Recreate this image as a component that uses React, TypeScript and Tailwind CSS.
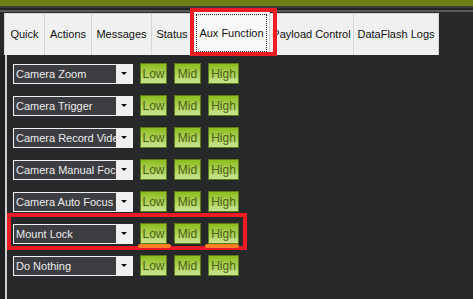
import React from 'react';

const tabs = [
  { label: 'Quick', w: 'w-[41px]' },
  { label: 'Actions', w: 'w-[47px]' },
  { label: 'Messages', w: 'w-[60px]' },
  { label: 'Status', w: 'w-[41px]' },
  { label: 'Aux Function', w: 'w-[77px]', active: true },
  { label: 'Payload Control', w: 'w-[84px]' },
  { label: 'DataFlash Logs', w: 'w-[85px]' },
];

const rows = [
  'Camera Zoom',
  'Camera Trigger',
  'Camera Record Video',
  'Camera Manual Focus',
  'Camera Auto Focus',
  'Mount Lock',
  'Do Nothing',
];

function GreenBtn({ label, w }: { label: string; w: string }) {
  return (
    <div
      className={`${w} h-[21px] flex items-center justify-center border border-[#5f7d12] bg-[linear-gradient(to_bottom,#8dbd1e,#c8e38f)] text-[12px] text-[#4f6212] leading-none`}
    >
      {label}
    </div>
  );
}

function Combo({ text }: { text: string }) {
  return (
    <div className="w-[120px] h-[20px] flex border border-[#f0f0f0] bg-[#3c3d40]">
      <div className="w-[102px] overflow-hidden whitespace-nowrap pl-[2px] text-[11px] leading-[18px] text-[#ececec]">
        {text}
      </div>
      <div className="w-[16px] bg-[#f0f0f0] flex items-center justify-center">
        <div className="w-0 h-0 border-x-[3px] border-x-transparent border-t-[3px] border-t-[#111]" />
      </div>
    </div>
  );
}

export default function App() {
  return (
    <div
      className="relative w-[473px] h-[299px] overflow-hidden bg-[#27282a] flex flex-col"
      style={{ fontFamily: '"Liberation Sans", Arial, sans-serif' }}
    >
      <div className="h-[6px] shrink-0 bg-[#6c7f13]" />
      <div className="h-[2px] shrink-0 bg-[#3b3b3b]" />
      <div className="h-[2px] shrink-0 bg-[#242424]" />
      <div className="h-[2px] shrink-0 bg-[#5a5a5a]" />
      <div className="h-[1px] shrink-0 bg-[#2a2a2a]" />
      {/* tab strip */}
      <div className="flex shrink-0 h-[42px] pl-[4px] items-end">
        {tabs.map((t) =>
          t.active ? (
            <div
              key={t.label}
              className={`${t.w} h-[45px] -mt-[3px] bg-[#fafafa] border border-[#d0d0d0] border-b-0 flex items-center justify-center`}
            >
              <div className="border border-dotted border-[#222] h-[38px] w-[71px] flex items-center justify-center whitespace-nowrap text-[11px] text-[#111]">
                {t.label}
              </div>
            </div>
          ) : (
            <div
              key={t.label}
              className={`${t.w} h-[42px] bg-[#f0f0f0] border-r border-t border-[#d6d6d6] first:border-l flex items-center justify-center whitespace-nowrap text-[11px] text-[#111]`}
            >
              {t.label}
            </div>
          )
        )}
      </div>
      {/* panel */}
      <div className="flex flex-1 overflow-hidden">
        <div className="w-[5px] bg-[#1f2021]" />
        <div className="w-[2px] bg-[#cfd0d0]" />
        <div className="flex-1 grid grid-rows-[repeat(7,21px)] gap-y-[11px] content-start pt-[8px] pl-[6px] overflow-hidden">
          {rows.map((r) => (
            <div key={r} className="flex items-center gap-[7px]">
              <Combo text={r} />
              <GreenBtn label="Low" w="w-[27px]" />
              <GreenBtn label="Mid" w="w-[27px]" />
              <GreenBtn label="High" w="w-[31px]" />
            </div>
          ))}
        </div>
      </div>

      {/* annotations */}
      <div className="absolute left-[7px] top-[213px] w-[240px] h-[37px] border-[4px] border-[#ed1c24]" />
      <div className="absolute left-[190px] top-[8px] w-[87px] h-[48px] border-[4px] border-[#ed1c24]" />
      <div className="absolute left-[138px] top-[244px] w-[33px] h-[4px] rounded-full bg-[#ff7f27]" />
      <div className="absolute left-[205px] top-[244px] w-[34px] h-[4px] rounded-full bg-[#ff7f27]" />
    </div>
  );
}
